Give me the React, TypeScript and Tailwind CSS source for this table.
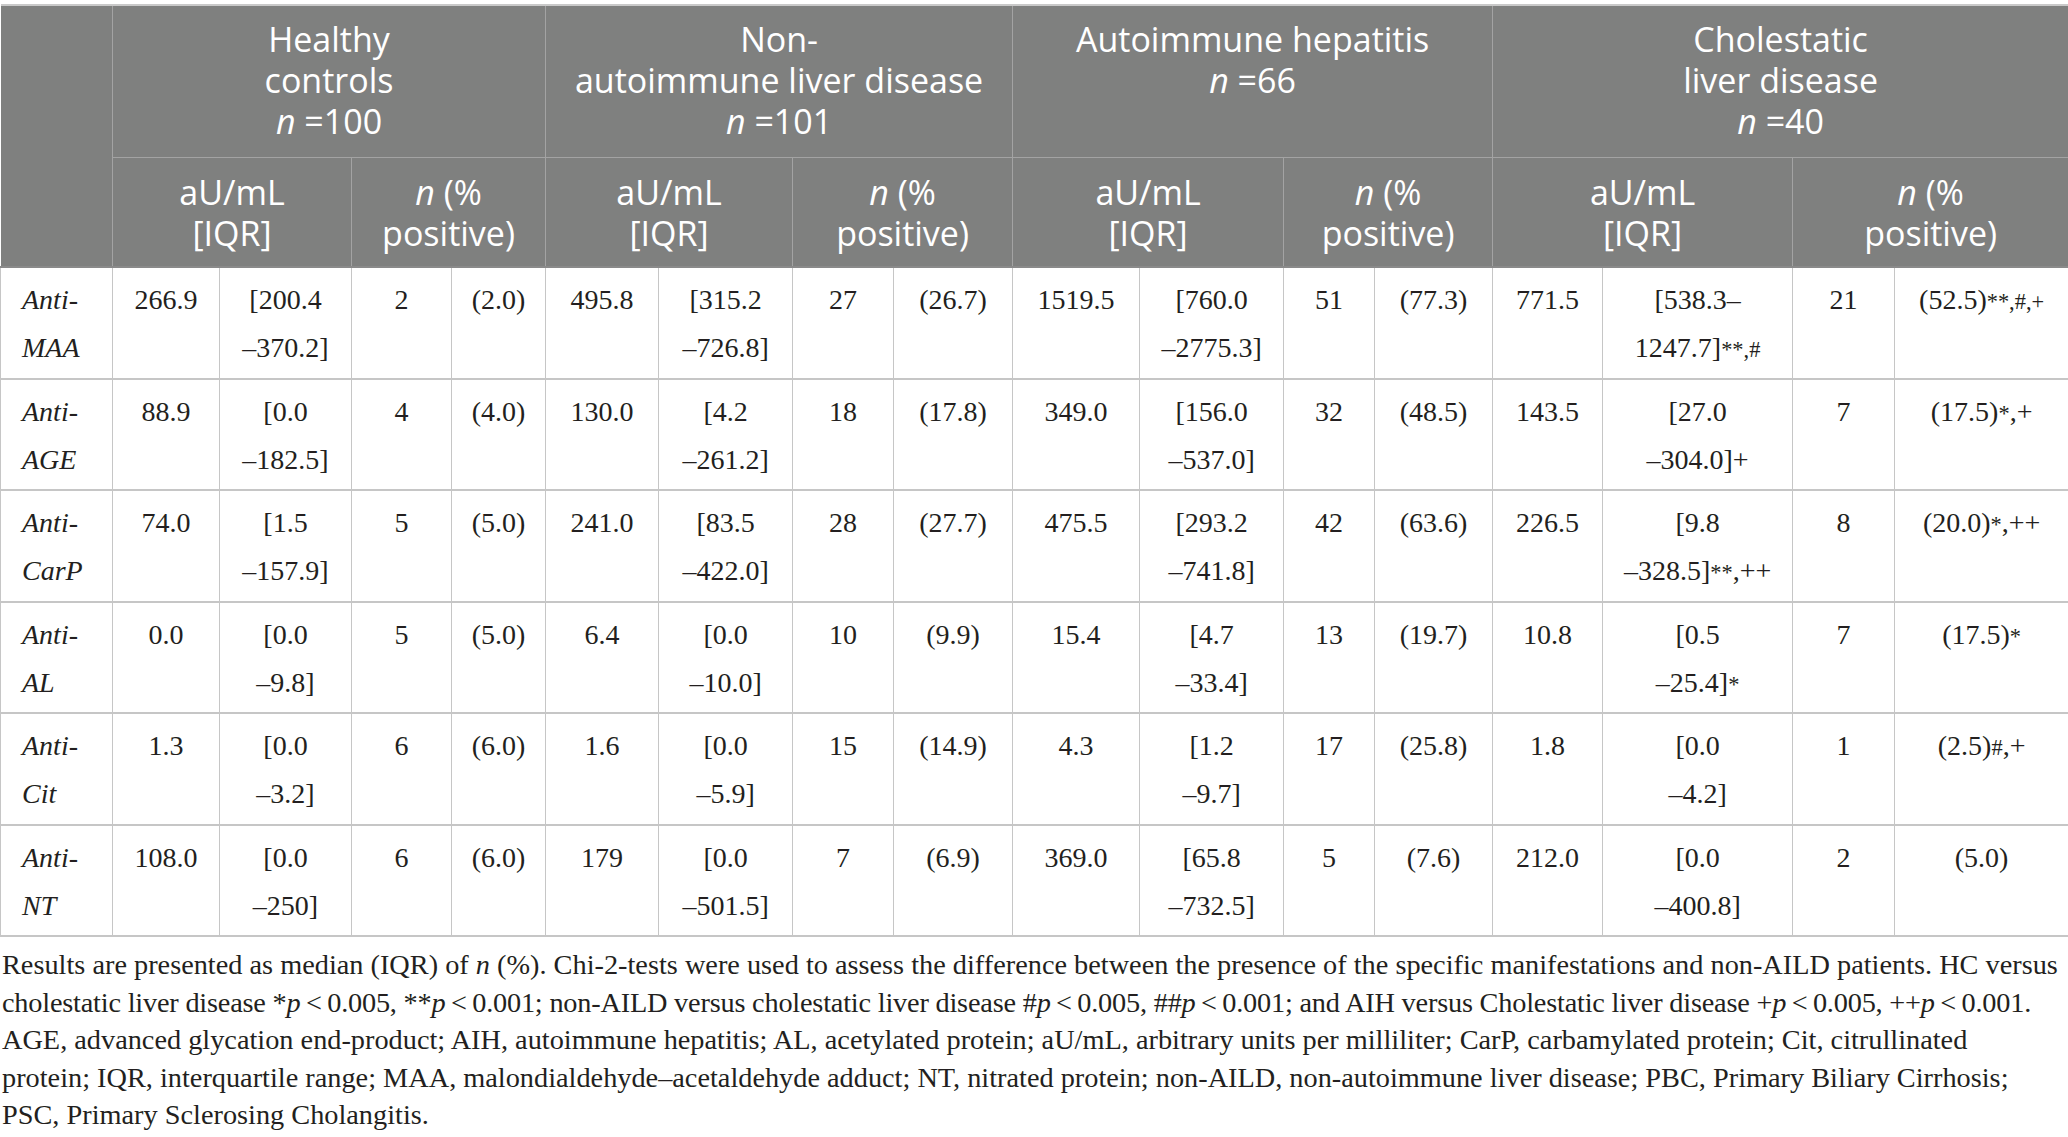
import type { ReactNode } from "react";

type Row = {
  label: string;
  cells: ReactNode[][];
};

const colWidths = [
  "w-[112px]",
  "w-[107px]",
  "w-[132px]",
  "w-[100px]",
  "w-[94px]",
  "w-[113px]",
  "w-[134px]",
  "w-[101px]",
  "w-[119px]",
  "w-[127px]",
  "w-[144px]",
  "w-[91px]",
  "w-[118px]",
  "w-[110px]",
  "w-[190px]",
  "w-[102px]",
  "w-[174px]",
];

const groups = [
  { lines: ["Healthy", "controls"], n: "100" },
  { lines: ["Non-", "autoimmune liver disease"], n: "101" },
  { lines: ["Autoimmune hepatitis"], n: "66" },
  { lines: ["Cholestatic", "liver disease"], n: "40" },
];

function Mark({ children }: { children: ReactNode }) {
  return <span className="text-[0.8em]">{children}</span>;
}

function Lt() {
  return <>{"\u2009<\u2009"}</>;
}

const rows: Row[] = [
  {
    label: "MAA",
    cells: [
      ["266.9"], ["[200.4", "–370.2]"], ["2"], ["(2.0)"],
      ["495.8"], ["[315.2", "–726.8]"], ["27"], ["(26.7)"],
      ["1519.5"], ["[760.0", "–2775.3]"], ["51"], ["(77.3)"],
      ["771.5"],
      ["[538.3–", <>1247.7]<Mark>**,#</Mark></>],
      ["21"],
      [<>(52.5)<Mark>**,#,+</Mark></>],
    ],
  },
  {
    label: "AGE",
    cells: [
      ["88.9"], ["[0.0", "–182.5]"], ["4"], ["(4.0)"],
      ["130.0"], ["[4.2", "–261.2]"], ["18"], ["(17.8)"],
      ["349.0"], ["[156.0", "–537.0]"], ["32"], ["(48.5)"],
      ["143.5"],
      ["[27.0", "–304.0]+"],
      ["7"],
      [<>(17.5)<Mark>*</Mark>,+</>],
    ],
  },
  {
    label: "CarP",
    cells: [
      ["74.0"], ["[1.5", "–157.9]"], ["5"], ["(5.0)"],
      ["241.0"], ["[83.5", "–422.0]"], ["28"], ["(27.7)"],
      ["475.5"], ["[293.2", "–741.8]"], ["42"], ["(63.6)"],
      ["226.5"],
      ["[9.8", <>–328.5]<Mark>**</Mark>,++</>],
      ["8"],
      [<>(20.0)<Mark>*</Mark>,++</>],
    ],
  },
  {
    label: "AL",
    cells: [
      ["0.0"], ["[0.0", "–9.8]"], ["5"], ["(5.0)"],
      ["6.4"], ["[0.0", "–10.0]"], ["10"], ["(9.9)"],
      ["15.4"], ["[4.7", "–33.4]"], ["13"], ["(19.7)"],
      ["10.8"],
      ["[0.5", <>–25.4]<Mark>*</Mark></>],
      ["7"],
      [<>(17.5)<Mark>*</Mark></>],
    ],
  },
  {
    label: "Cit",
    cells: [
      ["1.3"], ["[0.0", "–3.2]"], ["6"], ["(6.0)"],
      ["1.6"], ["[0.0", "–5.9]"], ["15"], ["(14.9)"],
      ["4.3"], ["[1.2", "–9.7]"], ["17"], ["(25.8)"],
      ["1.8"],
      ["[0.0", "–4.2]"],
      ["1"],
      [<>(2.5)<Mark>#</Mark>,+</>],
    ],
  },
  {
    label: "NT",
    cells: [
      ["108.0"], ["[0.0", "–250]"], ["6"], ["(6.0)"],
      ["179"], ["[0.0", "–501.5]"], ["7"], ["(6.9)"],
      ["369.0"], ["[65.8", "–732.5]"], ["5"], ["(7.6)"],
      ["212.0"],
      ["[0.0", "–400.8]"],
      ["2"],
      ["(5.0)"],
    ],
  },
];

const headCell =
  "border border-[#a3a3a3] align-top text-center font-normal text-white";

export default function App() {
  return (
    <div className="min-h-screen bg-white pt-[4px] text-[#231f20]">
      <table className="w-[2068px] table-fixed border-collapse">
        <colgroup>
          {colWidths.map((width, index) => (
            <col key={index} className={width} />
          ))}
        </colgroup>
        <thead className="bg-[#7f807f] font-['Open_Sans',sans-serif] text-[34px] leading-[41px]">
          <tr className="h-[152px] border-t-2 border-t-[#c9c9c9]">
            <th rowSpan={2} className="border-r border-r-[#a3a3a3]" />
            {groups.map((group) => (
              <th key={group.n} colSpan={4} className={`${headCell} pt-[13px]`}>
                {group.lines.map((line) => (
                  <div key={line}>{line}</div>
                ))}
                <div>
                  <i>n</i> =<span>{group.n}</span>
                </div>
              </th>
            ))}
          </tr>
          <tr className="h-[110px] border-b-2 border-b-[#8a8a8a]">
            {groups.map((group) => [
              <th key={`${group.n}-au`} colSpan={2} className={`${headCell} pt-[14px]`}>
                <div>aU/mL</div>
                <div>[IQR]</div>
              </th>,
              <th key={`${group.n}-pos`} colSpan={2} className={`${headCell} pt-[14px]`}>
                <div>
                  <i>n</i> (%
                </div>
                <div>positive)</div>
              </th>,
            ])}
          </tr>
        </thead>
        <tbody className="font-['Liberation_Serif',serif] text-[28px] leading-[48px]">
          {rows.map((row) => (
            <tr key={row.label} className="h-[111.5px] border-b-2 border-b-[#c6c6c6]">
              <td className="border-x border-[#c6c6c6] pt-[8px] pl-[21px] align-top italic">
                <div>Anti-</div>
                <div>{row.label}</div>
              </td>
              {row.cells.map((lines, index) => (
                <td
                  key={index}
                  className="border-x border-[#c6c6c6] pt-[8px] text-center align-top whitespace-nowrap"
                >
                  {lines.map((line, lineIndex) => (
                    <div key={lineIndex}>{line}</div>
                  ))}
                </td>
              ))}
            </tr>
          ))}
        </tbody>
      </table>

      <div className="mt-[9px] pl-[2px] font-['Liberation_Serif',serif] text-[28.3px] leading-[37.5px] whitespace-nowrap">
        <p>
          Results are presented as median (IQR) of <i>n</i> (%). Chi-2-tests were used to
          assess the difference between the presence of the specific manifestations and
          non-AILD patients. HC versus
        </p>
        <p className="tracking-[-0.2px]">
          cholestatic liver disease *<i>p</i>
          <Lt />0.005, **<i>p</i>
          <Lt />0.001; non-AILD versus cholestatic liver disease #<i>p</i>
          <Lt />0.005, ##<i>p</i>
          <Lt />0.001; and AIH versus Cholestatic liver disease +<i>p</i>
          <Lt />0.005, ++<i>p</i>
          <Lt />0.001.
        </p>
        <p>
          AGE, advanced glycation end-product; AIH, autoimmune hepatitis; AL, acetylated
          protein; aU/mL, arbitrary units per milliliter; CarP, carbamylated protein; Cit,
          citrullinated
        </p>
        <p>
          protein; IQR, interquartile range; MAA, malondialdehyde–acetaldehyde adduct; NT,
          nitrated protein; non-AILD, non-autoimmune liver disease; PBC, Primary Biliary
          Cirrhosis;
        </p>
        <p>PSC, Primary Sclerosing Cholangitis.</p>
      </div>
    </div>
  );
}
